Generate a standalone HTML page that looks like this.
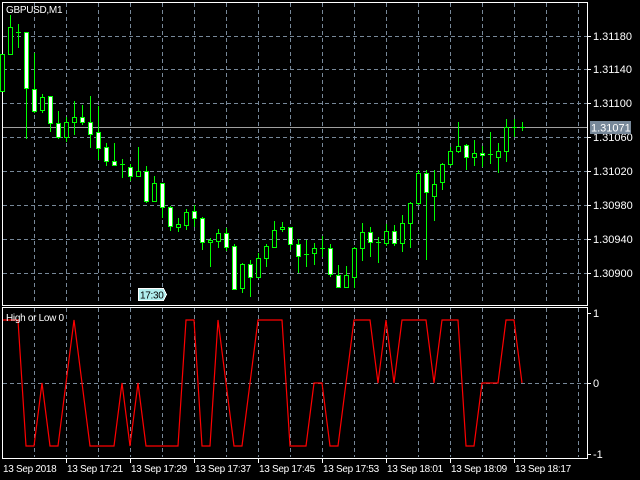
<!DOCTYPE html>
<html><head><meta charset="utf-8"><style>
html,body{margin:0;padding:0;background:#000;width:640px;height:480px;overflow:hidden}
svg{display:block}
text{font-family:"Liberation Sans",sans-serif;font-size:11px;fill:#fff}
text.n{font-size:10px;letter-spacing:-0.3px}
</style></head><body>
<svg width="640" height="480" xmlns="http://www.w3.org/2000/svg" shape-rendering="crispEdges">
<g stroke="#778899" stroke-dasharray="4,3" stroke-width="1">
<path d="M34.5 3V304M66.5 3V304M98.5 3V304M130.5 3V304M162.5 3V304M194.5 3V304M226.5 3V304M258.5 3V304M290.5 3V304M322.5 3V304M354.5 3V304M386.5 3V304M418.5 3V304M450.5 3V304M482.5 3V304M514.5 3V304M546.5 3V304M578.5 3V304"/>
<path d="M3 36.5H587M3 69.5H587M3 103.5H587M3 137.5H587M3 171.5H587M3 205.5H587M3 239.5H587M3 273.5H587"/>
<path d="M34.5 308V457M66.5 308V457M98.5 308V457M130.5 308V457M162.5 308V457M194.5 308V457M226.5 308V457M258.5 308V457M290.5 308V457M322.5 308V457M354.5 308V457M386.5 308V457M418.5 308V457M450.5 308V457M482.5 308V457M514.5 308V457M546.5 308V457M578.5 308V457"/>
<path d="M3 383.5H587"/>
</g>
<line x1="3" y1="127.5" x2="587" y2="127.5" stroke="#a0a0a0"/>
<g fill="none" stroke="#fff">
<path d="M2.5 2.5H587.5V305.5H2.5Z"/>
<path d="M2.5 307.5H587.5V458.5H2.5Z"/>
<path d="M587 36.5h4M587 69.5h4M587 103.5h4M587 137.5h4M587 171.5h4M587 205.5h4M587 239.5h4M587 273.5h4M587 313.5h4M587 383.5h4M587 454.5h4"/>
<path d="M66.5 458v5M130.5 458v5M194.5 458v5M258.5 458v5M322.5 458v5M386.5 458v5M450.5 458v5M514.5 458v5"/>
</g>
<g stroke="#00ff00" fill="none">
<path d="M2.5 54V91M10.5 15V54M18.5 24V48M26.5 32V139M34.5 53V113M42.5 94V113M50.5 96V132M58.5 111V139M66.5 117V142M74.5 101V135M82.5 105V125M90.5 96V148M98.5 106V160M106.5 143V166M114.5 143V166M122.5 159V178M130.5 164V181M138.5 147V177M146.5 166V203M154.5 176V202M162.5 183V218M170.5 206V231M178.5 218V232M186.5 209V230M194.5 205V227M202.5 217V250M210.5 238V267M218.5 229V248M226.5 228V251M234.5 244V289M242.5 263V293M250.5 260V297M258.5 253V277M266.5 244V267M274.5 221V247M282.5 222V232M290.5 227V250M298.5 239V273M306.5 240V267M314.5 243V265M322.5 236V257M330.5 244V277M338.5 265V287M346.5 266V287M354.5 247V288M362.5 223V261M370.5 227V257M378.5 237V263M386.5 224V246M394.5 225V246M402.5 215V252M410.5 202V248M418.5 170V205M426.5 170V260M434.5 170V221M442.5 163V190M450.5 147V166M458.5 122V153M466.5 144V170M474.5 140V166M482.5 146V167M490.5 132V164M498.5 143V173M506.5 119V162M514.5 119V137M522.5 122V131"/>
<path d="M16 32.5h5M120 164.5h5M304 254.5h5M320 248.5h5M376 242.5h5M488 154.5h5M512 127.5h5M520 127.5h5"/>
</g>
<g stroke="#00ff00" fill="#000">
<rect x="0.5" y="54.5" width="4" height="37"/><rect x="8.5" y="27.5" width="4" height="27"/>
<rect x="40.5" y="97.5" width="4" height="13"/><rect x="64.5" y="122.5" width="4" height="15"/>
<rect x="72.5" y="117.5" width="4" height="5"/><rect x="136.5" y="171.5" width="4" height="5"/>
<rect x="152.5" y="183.5" width="4" height="18"/><rect x="176.5" y="224.5" width="4" height="3"/>
<rect x="184.5" y="212.5" width="4" height="13"/><rect x="208.5" y="240.5" width="4" height="2"/>
<rect x="216.5" y="233.5" width="4" height="8"/><rect x="240.5" y="264.5" width="4" height="24"/>
<rect x="256.5" y="258.5" width="4" height="19"/><rect x="264.5" y="246.5" width="4" height="12"/>
<rect x="272.5" y="230.5" width="4" height="17"/><rect x="280.5" y="227.5" width="4" height="2"/>
<rect x="312.5" y="248.5" width="4" height="5"/><rect x="344.5" y="275.5" width="4" height="12"/>
<rect x="352.5" y="248.5" width="4" height="29"/><rect x="360.5" y="232.5" width="4" height="16"/>
<rect x="384.5" y="231.5" width="4" height="12"/><rect x="400.5" y="223.5" width="4" height="20"/>
<rect x="408.5" y="203.5" width="4" height="20"/><rect x="416.5" y="173.5" width="4" height="30"/>
<rect x="432.5" y="184.5" width="4" height="12"/><rect x="440.5" y="164.5" width="4" height="18"/>
<rect x="448.5" y="151.5" width="4" height="13"/><rect x="456.5" y="146.5" width="4" height="5"/>
<rect x="472.5" y="153.5" width="4" height="4"/><rect x="496.5" y="151.5" width="4" height="6"/>
<rect x="504.5" y="127.5" width="4" height="24"/>
</g>
<g stroke="#00ff00" fill="#fff">
<rect x="24.5" y="32.5" width="4" height="56"/><rect x="32.5" y="89.5" width="4" height="22"/>
<rect x="48.5" y="96.5" width="4" height="27"/><rect x="56.5" y="123.5" width="4" height="14"/>
<rect x="80.5" y="117.5" width="4" height="5"/><rect x="88.5" y="122.5" width="4" height="12"/>
<rect x="96.5" y="132.5" width="4" height="16"/><rect x="104.5" y="147.5" width="4" height="14"/>
<rect x="112.5" y="161.5" width="4" height="4"/><rect x="128.5" y="167.5" width="4" height="9"/>
<rect x="144.5" y="171.5" width="4" height="30"/><rect x="160.5" y="183.5" width="4" height="24"/>
<rect x="168.5" y="207.5" width="4" height="19"/><rect x="192.5" y="211.5" width="4" height="7"/>
<rect x="200.5" y="218.5" width="4" height="24"/><rect x="224.5" y="233.5" width="4" height="14"/>
<rect x="232.5" y="246.5" width="4" height="43"/><rect x="248.5" y="264.5" width="4" height="13"/>
<rect x="288.5" y="227.5" width="4" height="17"/><rect x="296.5" y="244.5" width="4" height="12"/>
<rect x="328.5" y="248.5" width="4" height="26"/><rect x="336.5" y="275.5" width="4" height="12"/>
<rect x="368.5" y="232.5" width="4" height="10"/><rect x="392.5" y="231.5" width="4" height="12"/>
<rect x="424.5" y="173.5" width="4" height="19"/><rect x="464.5" y="145.5" width="4" height="12"/>
<rect x="480.5" y="153.5" width="4" height="2"/>
</g>
<polyline fill="none" stroke="#ff0000" stroke-width="1.2" shape-rendering="auto" points="3,320 18,320 26,446 34,446 42,383 50,446 58,446 74,320 90,446 114,446 122,383 130,446 138,383 146,446 178,446 186,320 194,320 202,446 210,446 218,320 234,446 242,446 258,320 282,320 290,446 306,446 314,383 322,383 330,446 338,446 354,320 370,320 378,383 386,320 394,383 402,320 426,320 434,383 442,320 458,320 466,446 474,446 482,383 498,383 506,320 514,320 522,383"/>
<text class="n" x="6" y="13">GBPUSD,M1</text>
<text class="n" x="6" y="321">High or Low 0</text>
<g>
<text x="593" y="40">1.31180</text><text x="593" y="73">1.31140</text><text x="593" y="107">1.31100</text>
<text x="593" y="141">1.31060</text><text x="593" y="175">1.31020</text><text x="593" y="209">1.30980</text>
<text x="593" y="243">1.30940</text><text x="593" y="277">1.30900</text>
<text x="593" y="317">1</text><text x="593" y="387">0</text><text x="593" y="458">-1</text>
</g>
<rect x="590" y="121" width="41" height="13" fill="#778899"/>
<text x="591" y="131.5">1.31071</text>
<path d="M138.5 288.5H163.5L166.5 294.5L163.5 300.5H138.5Z" fill="#b0eeee" stroke="#fff"/>
<text class="n" x="140" y="298.5" style="fill:#000">17:30</text>
<g>
<text class="n" x="3" y="472">13 Sep 2018</text><text class="n" x="67" y="472">13 Sep 17:21</text>
<text class="n" x="131" y="472">13 Sep 17:29</text><text class="n" x="195" y="472">13 Sep 17:37</text>
<text class="n" x="259" y="472">13 Sep 17:45</text><text class="n" x="323" y="472">13 Sep 17:53</text>
<text class="n" x="387" y="472">13 Sep 18:01</text><text class="n" x="451" y="472">13 Sep 18:09</text>
<text class="n" x="515" y="472">13 Sep 18:17</text>
</g>
</svg>
</body></html>
